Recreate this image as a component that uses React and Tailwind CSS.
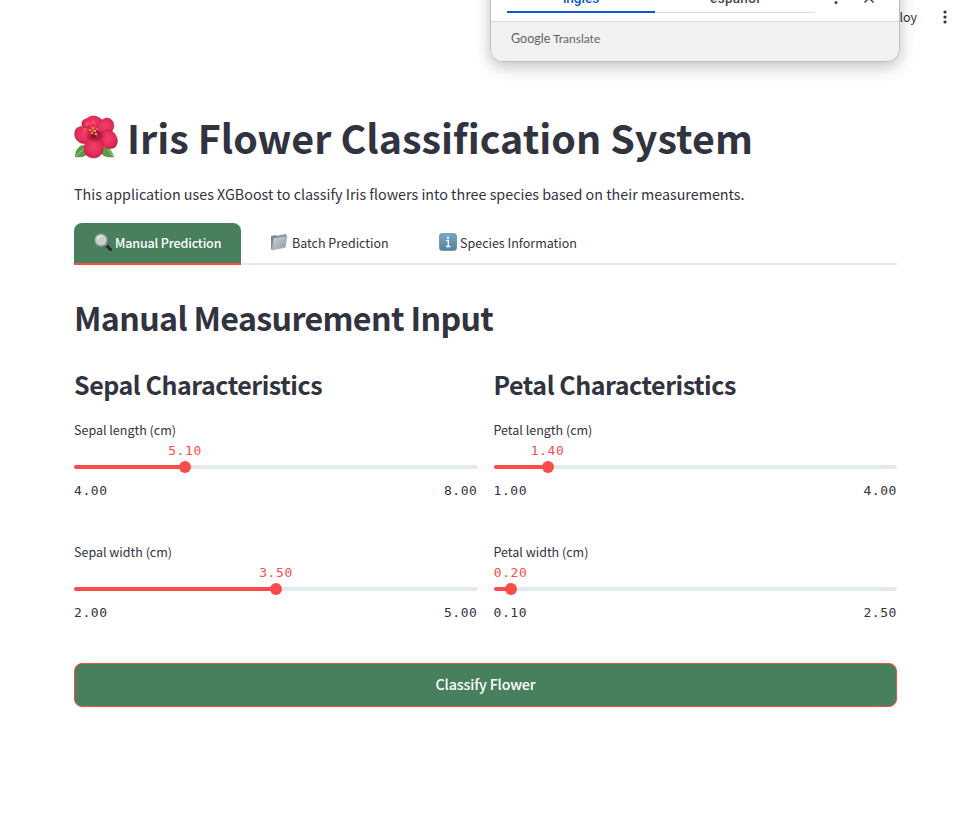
import React from 'react';

function Hibiscus() {
  return (
    <svg className="mt-[7px] h-[44px] w-[44px] shrink-0" viewBox="0 0 44 44">
      <defs>
        <radialGradient id="petal" cx="50%" cy="45%" r="60%">
          <stop offset="0%" stopColor="#ef3f68" />
          <stop offset="65%" stopColor="#e62d59" />
          <stop offset="100%" stopColor="#bd1740" />
        </radialGradient>
        <radialGradient id="throat">
          <stop offset="0%" stopColor="#7c0822" />
          <stop offset="100%" stopColor="#a50d35" stopOpacity="0" />
        </radialGradient>
      </defs>
      <path d="M9 30C4 31 1 36 1 42c6 1 12 0 15-7zM32 30c4 3 7 8 8 12-5 1-11 0-14-5z" fill="#5c9b45" />
      <path d="M2 41l9-8M39 41l-7-9" stroke="#a5cf83" strokeWidth="1" fill="none" />
      <g fill="url(#petal)" stroke="#bd1b45" strokeWidth="0.5">
        <path d="M20 19C12 18 7 12 8 7c1-3 5-3 7-5 4-2 9-1 13 3 1 5-2 12-8 14z" />
        <path d="M22 18c0-8 4-13 10-15 4 0 5 1 7 4 2 5 0 9-4 11-4 3-9 3-13 0z" />
        <path d="M20 22C17 28 9 31 4 26c-4-3-4-9-2-12 4-4 10-3 14-1 3 2 4 5 4 9z" />
        <path d="M24 21c3-5 9-7 14-5 5 4 7 10 4 15-2 3-7 3-10 2-4-2-7-7-8-12z" />
        <path d="M21 22c6 1 10 7 8 13-1 5-5 8-9 8-6 0-10-4-10-9 0-6 4-12 11-12z" />
      </g>
      <ellipse cx="21" cy="21" rx="11" ry="7" fill="url(#throat)" />
      <g stroke="#c3173d" strokeWidth="1" fill="none"><path d="M20 19l-6-9M20 19l-1-11M20 19l-9-5" /></g>
      <g fill="#f94a60"><circle cx="13" cy="9" r="2" /><circle cx="19.500" cy="7.500" r="2" /><circle cx="11" cy="15" r="2" /></g>
      <g fill="#ffc62b"><circle cx="16" cy="15" r="1" /><circle cx="19" cy="13" r="1" /><circle cx="21" cy="16" r="1.100" /><circle cx="18" cy="18" r="1" /><circle cx="22" cy="19" r="1" /><circle cx="19" cy="15.500" r=".8" /><circle cx="23" cy="14" r=".8" /></g>
    </svg>
  );
}

function Magnifier() {
  return (
    <svg className="h-[18px] w-[18px] shrink-0" viewBox="0 0 18 18">
      <path d="M11 11l5.500 5.500" stroke="#29272b" strokeWidth="3" strokeLinecap="round" />
      <path d="M10.500 10.500l2 2" stroke="#aaa" strokeWidth="2" />
      <circle cx="7" cy="7" r="6.200" fill="#c2d2cb" stroke="#8b8f8d" strokeWidth="1.200" />
      <path d="M3.500 6a4 4 0 0 1 5-3" stroke="#e5eee9" strokeWidth="1.500" fill="none" />
    </svg>
  );
}

function Folder() {
  return (
    <svg className="-ml-px mr-px h-[18px] w-[18px] shrink-0" viewBox="0 0 18 18">
      <defs><linearGradient id="folder" x1="0" y1="0" x2="1" y2="1"><stop stopColor="#d2d7da" /><stop offset="1" stopColor="#8e989e" /></linearGradient></defs>
      <path d="M1 3l5-1 1 1 9-2v3L3 17l-2-1z" fill="#7c8990" />
      <path d="M3.500 5.300L17 2.800l-1.700 11.500L2 17z" fill="url(#folder)" stroke="#929ca2" strokeWidth=".5" />
    </svg>
  );
}

function InfoTile() {
  return (
    <svg className="h-[18px] w-[18px] shrink-0" viewBox="0 0 18 18">
      <defs><linearGradient id="tile" x1="0" y1="0" x2="0" y2="1"><stop stopColor="#78a9c6" /><stop offset="1" stopColor="#557f9f" /></linearGradient></defs>
      <rect x=".4" y=".4" width="17.200" height="17.200" rx="3" fill="url(#tile)" stroke="#4d7592" strokeWidth=".6" />
      <path d="M7.300 7.500h2v6M7 13.500h4.500" stroke="#fff" strokeWidth="1.300" fill="none" />
      <circle cx="9" cy="4.700" r="1.100" fill="#fff" />
    </svg>
  );
}

function Slider({ label, value, min, max, offset }) {
  return (
    <div className="h-[122px]">
      <div className="h-[20px] text-[12.5px] leading-[20px]">{label}</div>
      <div className="relative h-[44px] font-['DejaVu_Sans_Mono',monospace] text-[13px] tracking-[0.57px]">
        <div className="absolute top-0 -translate-x-1/2 leading-[21px] text-[#ff4b4b]" style={{ left: offset + 'px' }}>{value}</div>
        <div className="absolute top-[25px] h-1 w-full overflow-hidden rounded-full bg-[#e4e9ee]">
          <div className="h-full bg-[#ff4b4b]" style={{ width: offset + 'px' }} />
        </div>
        <div className="absolute top-[21px] size-3 -translate-x-1/2 rounded-full bg-[#ff4b4b]" style={{ left: offset + 'px' }} />
      </div>
      <div className="-mt-[4px] flex justify-between font-['DejaVu_Sans_Mono',monospace] text-[13px] leading-[21px] tracking-[0.57px]">
        <span>{min}</span><span>{max}</span>
      </div>
    </div>
  );
}

function TranslatePopup() {
  return (
    <div className="absolute -top-10 left-[490px] h-[102px] w-[410px] overflow-hidden rounded-[13px] border border-[#bdbdbd] bg-white shadow-[0_5px_16px_rgba(0,0,0,0.24)]">
      <div className="flex h-[61px] border-b border-[#dadada] pl-4">
        <div className="h-[52px] w-[148px] border-b-2 border-[#0b57d0] pt-[27px] text-center font-[Roboto,sans-serif] text-[13.5px] font-medium leading-[20px] text-[#0b57d0]">inglés</div>
        <div className="h-[52px] w-[160px] border-b border-[#dadada] pt-[27px] text-center font-[Roboto,sans-serif] text-[13.5px] font-medium leading-[20px] tracking-[0.3px] text-[#474747]">español</div>
        <svg className="ml-[15px] mt-[28px] h-4 w-12" viewBox="0 0 48 16" fill="#444">
          <circle cx="6" cy="4" r="1.500" /><circle cx="6" cy="8.500" r="1.500" /><circle cx="6" cy="13.500" r="1.500" />
          <path d="M34.500 13.500l9-9M43.500 13.500l-9-9" stroke="#444" strokeWidth="1.500" />
        </svg>
      </div>
      <div className="flex h-10 gap-[2px] bg-[#f1f1f1] pl-5 font-[Lato,sans-serif] text-[12px] leading-[33px] text-[#5f6368]">
        <span className="w-[40px] text-[12.5px]">Google</span><span>Translate</span>
      </div>
    </div>
  );
}

export default function App() {
  return (
    <div className="relative h-[830px] w-[969px] overflow-hidden bg-white font-['Noto_Sans_CJK_SC',sans-serif] text-[#31333f]">
      <header className="flex h-[108px] justify-end pr-[18px]">
        <span className="mt-[7px] h-5 text-[12.5px] leading-[20px]">Deploy</span>
        <svg className="ml-[22px] mt-[9px] h-4 w-3" viewBox="0 0 12 16" fill="#31333f">
          <circle cx="6" cy="3" r="1.600" /><circle cx="6" cy="8" r="1.600" /><circle cx="6" cy="13" r="1.600" />
        </svg>
      </header>
      <main className="ml-[74px] w-[823px]">
        <div className="flex h-[73px]">
          <Hibiscus />
          <h1 className="ml-[9px] mt-[2px] h-[53px] whitespace-nowrap text-[39.4px] font-bold leading-[53px] tracking-[0.03px]">Iris Flower Classification System</h1>
        </div>
        <p className="h-[42px] text-[14.32px] leading-[25px]">This application uses XGBoost to classify Iris flowers into three species based on their measurements.</p>
        <nav className="flex h-[42px] border-b-2 border-[#e8e8e9] text-[12.5px] leading-[20px]">
          <div className="flex h-[42px] w-[167px] shrink-0 gap-[3px] rounded-t-lg border-b-2 border-[#ff4b4b] bg-[#487f5d] pl-[20px] pt-[10px] text-white"><Magnifier /><span className="font-medium tracking-[-0.15px]">Manual Prediction</span></div>
          <div className="flex w-[168px] shrink-0 gap-[3px] pl-[30px] pt-[10px]"><Folder /><span>Batch Prediction</span></div>
          <div className="flex gap-[3px] pl-[30px] pt-[10px]"><InfoTile /><span>Species Information</span></div>
        </nav>
        <h2 className="mt-[31px] h-[70px] whitespace-nowrap text-[32.2px] font-semibold leading-[43px] tracking-[-0.65px]">Manual Measurement Input</h2>
        <div className="grid grid-cols-2 gap-4">
          <section>
            <h3 className="h-[54px] text-[25px] font-semibold leading-[36px] tracking-[-0.46px]">Sepal Characteristics</h3>
            <Slider label="Sepal length (cm)" value="5.10" min="4.00" max="8.00" offset={111} />
            <Slider label="Sepal width (cm)" value="3.50" min="2.00" max="5.00" offset={202} />
          </section>
          <section>
            <h3 className="h-[54px] text-[25px] font-semibold leading-[36px] tracking-[-0.46px]">Petal Characteristics</h3>
            <Slider label="Petal length (cm)" value="1.40" min="1.00" max="4.00" offset={54} />
            <Slider label="Petal width (cm)" value="0.20" min="0.10" max="2.50" offset={17} />
          </section>
        </div>
        <button className="-mt-px h-[44px] w-full rounded-lg border border-[#ff4b4b] bg-[#487f5d] pb-[2px] text-[14.3px] font-medium tracking-[-0.15px] text-white">Classify Flower</button>
      </main>
      <TranslatePopup />
    </div>
  );
}
